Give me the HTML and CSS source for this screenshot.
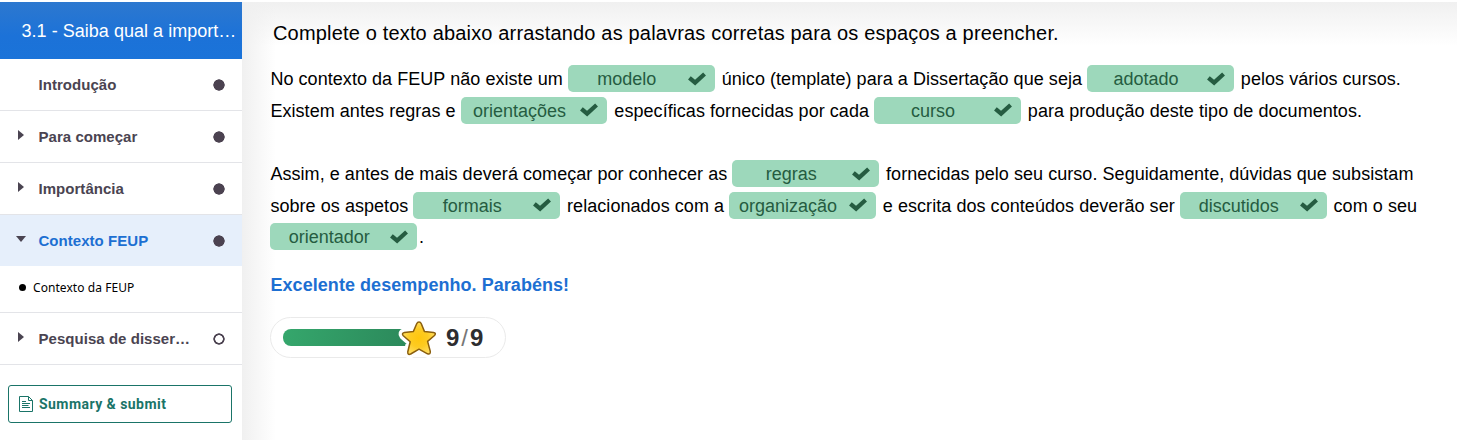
FILE: index.html
```html
<!DOCTYPE html>
<html lang="pt">
<head>
<meta charset="utf-8">
<title>Contexto da FEUP</title>
<link rel="stylesheet" href="styles.css">
</head>
<body>
<svg class="defs" width="0" height="0">
  <symbol id="check" viewBox="0 0 18 14"><path d="M3 7.2 L7.1 10.6 L15 3.4" fill="none" stroke="#255c41" stroke-width="4.2" stroke-linecap="square"/></symbol>
</svg>
<div class="app">
  <nav class="sidebar">
    <div class="book-title">3.1 - Saiba qual a import…</div>
    <div class="chapter"><span class="arrow"></span><span class="name">Introdução</span><span class="status"></span></div>
    <div class="chapter"><span class="arrow right"></span><span class="name">Para começar</span><span class="status"></span></div>
    <div class="chapter"><span class="arrow right"></span><span class="name">Importância</span><span class="status"></span></div>
    <div class="chapter active"><span class="arrow down"></span><span class="name">Contexto FEUP</span><span class="status"></span></div>
    <div class="section"><span class="bullet"></span><span>Contexto da FEUP</span></div>
    <div class="chapter"><span class="arrow right"></span><span class="name">Pesquisa de disser…</span><span class="status open"></span></div>
    <button class="submit">
      <svg width="14" height="17" viewBox="0 0 14 17" fill="none" stroke="#1a7468" stroke-width="1"><path d="M9.5 .5H.5V15.5H13.5V4.5M9.5 .5V4.5H13.5L9.5 .5M3 5.5H7M3 7.5H11M3 9.5H9.5M3 11.5H11"/></svg>
      <span>Summary &amp; submit</span>
    </button>
  </nav>
  <main class="content">
    <p class="task">Complete o texto abaixo arrastando as palavras corretas para os espaços a preencher.</p>
    <div class="text">
      <p>No contexto da FEUP não existe um <span class="pill"><span>modelo</span><svg><use href="#check"/></svg></span> único (template) para a Dissertação que seja <span class="pill"><span>adotado</span><svg><use href="#check"/></svg></span> pelos vários cursos.<br>Existem antes regras e <span class="pill"><span>orientações</span><svg><use href="#check"/></svg></span> específicas fornecidas por cada <span class="pill"><span>curso</span><svg><use href="#check"/></svg></span> para produção deste tipo de documentos.</p>
      <p>Assim, e antes de mais deverá começar por conhecer as <span class="pill"><span>regras</span><svg><use href="#check"/></svg></span> fornecidas pelo seu curso. Seguidamente, dúvidas que subsistam<br>sobre os aspetos <span class="pill"><span>formais</span><svg><use href="#check"/></svg></span> relacionados com a <span class="pill"><span>organização</span><svg><use href="#check"/></svg></span> e escrita dos conteúdos deverão ser <span class="pill"><span>discutidos</span><svg><use href="#check"/></svg></span> com o seu<br><span class="pill"><span>orientador</span><svg><use href="#check"/></svg></span>.</p>
    </div>
    <p class="feedback">Excelente desempenho. Parabéns!</p>
    <div class="score">
      <span class="bar"></span>
      <svg class="star" width="44" height="40" viewBox="0 0 44 40">
        <defs><radialGradient id="gold"><stop offset="0" stop-color="#ffc60d"/><stop offset=".55" stop-color="#fdcb22"/><stop offset="1" stop-color="#ffdc5c"/></radialGradient></defs>
        <path d="M22 4 Q23.6 4 24.3 5.8 L27.5 13.6 L36.5 14.4 Q39.6 15 37.5 17.5 L30.6 23.4 L33.3 33.4 Q33.6 37 30.5 35.8 L22 31.2 L13.7 36 Q10.4 37.4 10.8 33.8 L13.2 23.8 L6.3 17.8 Q4.2 15.2 7.4 14.5 L16.3 13.6 L19.7 5.8 Q20.5 4 22 4Z" fill="none" stroke="#fff" stroke-width="8" stroke-linejoin="round"/>
        <path d="M22 4 Q23.6 4 24.3 5.8 L27.5 13.6 L36.5 14.4 Q39.6 15 37.5 17.5 L30.6 23.4 L33.3 33.4 Q33.6 37 30.5 35.8 L22 31.2 L13.7 36 Q10.4 37.4 10.8 33.8 L13.2 23.8 L6.3 17.8 Q4.2 15.2 7.4 14.5 L16.3 13.6 L19.7 5.8 Q20.5 4 22 4Z" fill="url(#gold)" stroke="#8b5f0e" stroke-width="1.5" stroke-linejoin="round"/>
      </svg>
      <span class="points">9<i>/</i>9</span>
    </div>
  </main>
</div>
</body>
</html>
```
FILE: styles.css
```css
* { box-sizing: border-box; }
body { margin: 0; background: #fff; font-family: "Liberation Sans", Arial, sans-serif; color: #000; }
p { margin: 0; }
.defs { display: block; height: 0; }
.app { display: flex; height: 440px; padding-top: 2px; overflow: hidden; }
.sidebar { width: 242px; flex: none; background: #fff; }
.book-title { height: 57px; padding-left: 21.5px; line-height: 58px; font-size: 18px; letter-spacing: .03px; color: #fff; white-space: nowrap; background: linear-gradient(#2d78cf, #1c72d8 60%, #1a73d9); }
.chapter { display: flex; align-items: center; height: 52px; padding: 0 17px 0 16px; border-bottom: 1px solid #e3e4e8; font-size: 15px; letter-spacing: .04px; font-weight: bold; color: #4a4451; white-space: nowrap; }
.chapter.active { background: #e6effb; border-bottom-color: #fff; background-clip: padding-box; color: #1d6fd2; }
.arrow { width: 22.5px; height: 12px; flex: none; display: flex; }
.arrow.right::before { content: ""; align-self: flex-start; margin: -1px 0 0 2px; border-left: 6px solid #4a4451; border-top: 5.5px solid transparent; border-bottom: 5.5px solid transparent; }
.arrow.down::before { content: ""; align-self: flex-start; margin-top: 1px; border-top: 6px solid #4a4451; border-left: 5.5px solid transparent; border-right: 5.5px solid transparent; }
.name { flex: 1; padding-bottom: 1px; }
.status { width: 12px; height: 12px; flex: none; border-radius: 50%; background: radial-gradient(circle, #4b4250 5.4px, transparent 6px); }
.status.open { background: radial-gradient(circle, transparent 3.5px, #4b4250 4.1px, #4b4250 5.4px, transparent 6px); }
.section { display: flex; align-items: center; gap: 8px; height: 46px; padding: 0 0 4px 19px; border-bottom: 1px solid #e3e4e8; font: 12px "Noto Sans", sans-serif; letter-spacing: .06px; }
.bullet { width: 7px; height: 7px; margin-right: -1px; border-radius: 50%; background: #000; }
.submit { display: flex; align-items: center; gap: 6px; width: 224px; height: 38px; margin: 20px 0 0 8px; padding: 0 10px; border: 1px solid #1a7468; border-radius: 3px; background: #fff; color: #1a7468; font: bold 14px Roboto, sans-serif; letter-spacing: .45px; white-space: nowrap; }
.content { flex: 1; padding: 18px 0 0 28px; white-space: nowrap; background: linear-gradient(90deg, #f0f0f0, rgba(255, 255, 255, 0) 34px), linear-gradient(#f0f0f0, #fff 44px); }
.task { padding-left: 3px; font-size: 20px; line-height: 26px; letter-spacing: .17px; }
.text { padding: 18px 0 0 .4px; font-size: 18px; line-height: 31.7px; letter-spacing: .05px; }
.text p + p { margin-top: 31.6px; }
.pill { display: inline-flex; align-items: center; width: 146.7px; height: 27px; margin-right: 2px; padding: 2px 9px 0 0; border-radius: 5px; background: #9dd8bb; color: #255c41; line-height: 25px; letter-spacing: 0; vertical-align: baseline; }
.pill span { flex: 1; padding-right: 2px; text-align: center; }
.pill svg { width: 18px; height: 14px; flex: none; margin-top: -2px; }
.feedback { margin-top: 15px; padding-left: .5px; font-size: 18px; line-height: 32px; letter-spacing: .05px; font-weight: bold; color: #1d6fd2; }
.score { display: flex; align-items: center; width: 236px; height: 41px; margin-top: 16px; padding-left: 12px; border: 1px solid #eaeaea; border-radius: 21px; background: #fff; }
.bar { width: 131px; height: 17px; border-radius: 8px 0 0 8px; background: linear-gradient(100deg, #35a76c, #2b875a); }
.star { flex: none; margin-left: -17px; overflow: visible; }
.points { margin-left: 5px; font-size: 24px; font-weight: bold; color: #2d2d30; }
.points i { padding: 0 2px; font-style: normal; font-weight: normal; color: #777; }
```
